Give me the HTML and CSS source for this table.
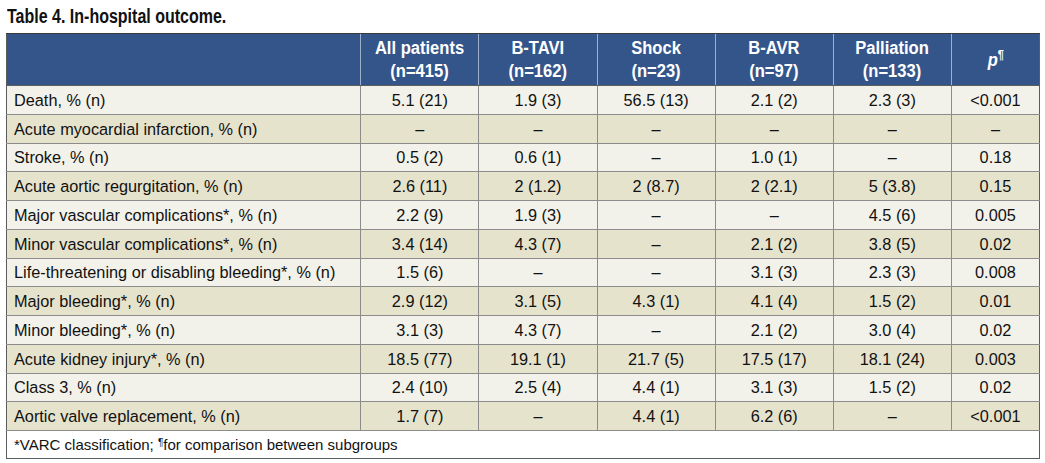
FILE: index.html
```html
<!DOCTYPE html>
<html>
<head>
<meta charset="utf-8">
<link rel="stylesheet" href="styles.css">
</head>
<body>
<div class="page">
  <h1 class="title"><span class="squeeze-left">Table 4. In-hospital outcome.</span></h1>
  <table class="outcome">
    <colgroup>
      <col class="c-label">
      <col class="c-val">
      <col class="c-val">
      <col class="c-val">
      <col class="c-val">
      <col class="c-val">
      <col class="c-p">
    </colgroup>
    <thead>
      <tr>
        <th></th>
        <th><span class="squeeze">All patients<br>(n=415)</span></th>
        <th><span class="squeeze">B-TAVI<br>(n=162)</span></th>
        <th><span class="squeeze">Shock<br>(n=23)</span></th>
        <th><span class="squeeze">B-AVR<br>(n=97)</span></th>
        <th><span class="squeeze">Palliation<br>(n=133)</span></th>
        <th><span class="squeeze"><span class="pi">p</span><sup class="para">¶</sup></span></th>
      </tr>
    </thead>
    <tbody>
      <tr><td>Death, % (n)</td><td>5.1 (21)</td><td>1.9 (3)</td><td>56.5 (13)</td><td>2.1 (2)</td><td>2.3 (3)</td><td>&lt;0.001</td></tr>
      <tr><td>Acute myocardial infarction, % (n)</td><td>–</td><td>–</td><td>–</td><td>–</td><td>–</td><td>–</td></tr>
      <tr><td>Stroke, % (n)</td><td>0.5 (2)</td><td>0.6 (1)</td><td>–</td><td>1.0 (1)</td><td>–</td><td>0.18</td></tr>
      <tr><td>Acute aortic regurgitation, % (n)</td><td>2.6 (11)</td><td>2 (1.2)</td><td>2 (8.7)</td><td>2 (2.1)</td><td>5 (3.8)</td><td>0.15</td></tr>
      <tr><td>Major vascular complications*, % (n)</td><td>2.2 (9)</td><td>1.9 (3)</td><td>–</td><td>–</td><td>4.5 (6)</td><td>0.005</td></tr>
      <tr><td>Minor vascular complications*, % (n)</td><td>3.4 (14)</td><td>4.3 (7)</td><td>–</td><td>2.1 (2)</td><td>3.8 (5)</td><td>0.02</td></tr>
      <tr><td>Life-threatening or disabling bleeding*, % (n)</td><td>1.5 (6)</td><td>–</td><td>–</td><td>3.1 (3)</td><td>2.3 (3)</td><td>0.008</td></tr>
      <tr><td>Major bleeding*, % (n)</td><td>2.9 (12)</td><td>3.1 (5)</td><td>4.3 (1)</td><td>4.1 (4)</td><td>1.5 (2)</td><td>0.01</td></tr>
      <tr><td>Minor bleeding*, % (n)</td><td>3.1 (3)</td><td>4.3 (7)</td><td>–</td><td>2.1 (2)</td><td>3.0 (4)</td><td>0.02</td></tr>
      <tr><td>Acute kidney injury*, % (n)</td><td>18.5 (77)</td><td>19.1 (1)</td><td>21.7 (5)</td><td>17.5 (17)</td><td>18.1 (24)</td><td>0.003</td></tr>
      <tr><td>Class 3, % (n)</td><td>2.4 (10)</td><td>2.5 (4)</td><td>4.4 (1)</td><td>3.1 (3)</td><td>1.5 (2)</td><td>0.02</td></tr>
      <tr><td>Aortic valve replacement, % (n)</td><td>1.7 (7)</td><td>–</td><td>4.4 (1)</td><td>6.2 (6)</td><td>–</td><td>&lt;0.001</td></tr>
    </tbody>
    <tfoot>
      <tr><td colspan="7">*VARC classification; <sup class="fpara">¶</sup>for comparison between subgroups</td></tr>
    </tfoot>
  </table>
</div>
</body>
</html>
```

FILE: styles.css
```css
html, body {
  margin: 0;
  padding: 0;
  background: #ffffff;
}

.page {
  padding: 5px 0 0 6px;
  font-family: "Liberation Sans", Arial, sans-serif;
  color: #111111;
}

.title {
  margin: 0 0 5px 1px;
  font-family: "Liberation Sans", Arial, sans-serif;
  font-weight: bold;
  font-size: 20px;
  line-height: 23px;
  color: #111111;
  white-space: nowrap;
}

.squeeze-left {
  display: inline-block;
  transform: scaleX(0.8);
  transform-origin: left center;
}

.squeeze {
  display: inline-block;
  transform: scaleX(0.92);
  transform-origin: center center;
}

.outcome {
  border-collapse: collapse;
  table-layout: fixed;
  width: 1034px;
  border: 1px solid #5c5c5c;
}

.c-label { width: 354px; }
.c-val { width: 118px; }
.c-p { width: 88px; }

.outcome thead th {
  background: #34558a;
  color: #ffffff;
  font-family: "Liberation Sans", Arial, sans-serif;
  font-weight: bold;
  font-size: 18px;
  line-height: 23px;
  height: 50px;
  padding: 1px 0 0 0;
  text-align: center;
  vertical-align: middle;
  border-left: 1px solid #9fb0cc;
  border-bottom: 1px solid #5c5c5c;
  border-top: 1px solid #3a3a3a;
  white-space: nowrap;
}

.outcome thead th:first-child {
  border-left: 1px solid #5c5c5c;
}

.pi {
  font-style: italic;
}

.para {
  font-size: 12px;
  font-style: normal;
  vertical-align: 7px;
  line-height: 0;
}

.outcome tbody tr {
  height: 28.75px;
}

.outcome tbody tr:nth-child(odd) td {
  background: #f3f2ea;
}

.outcome tbody tr:nth-child(even) td {
  background: #e6e3cd;
}

.outcome tbody td {
  font-size: 16.3px;
  line-height: 18px;
  padding: 0;
  text-align: center;
  vertical-align: middle;
  border: 1px solid #8c8c8c;
}

.outcome tbody td:first-child {
  text-align: left;
  padding-left: 7px;
  border-left: 1px solid #5c5c5c;
}

.outcome tbody td:last-child {
  border-right: 1px solid #5c5c5c;
}

.outcome tfoot td {
  height: 27px;
  padding: 0 0 0 7px;
  font-size: 15px;
  line-height: 18px;
  background: #ffffff;
  border: 1px solid #5c5c5c;
  vertical-align: middle;
}

.fpara {
  font-size: 10px;
  vertical-align: 4px;
  line-height: 0;
}
```
